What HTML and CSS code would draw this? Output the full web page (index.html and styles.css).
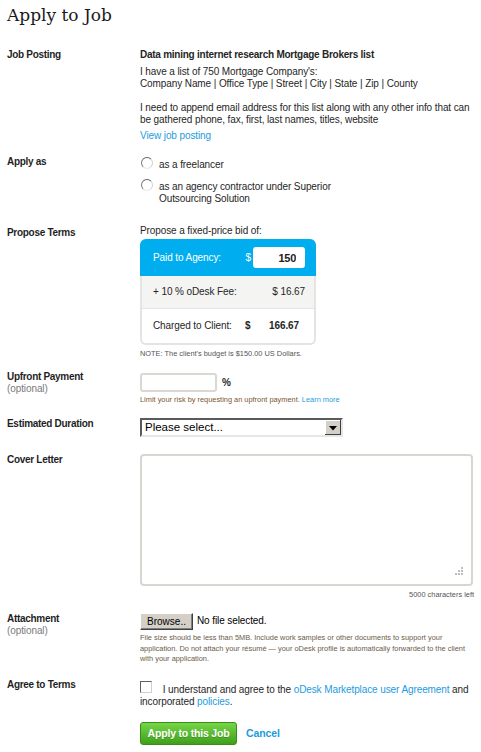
FILE: index.html
```html
<!DOCTYPE html>
<html lang="en">
<head>
    <meta charset="UTF-8">
    <title>Apply to Job</title>
    <link rel="stylesheet" href="styles.css">
</head>
<body>
    <h1>Apply to Job</h1>
    <form class="apply-form">
        <div class="field field-posting">
            <div class="field-label">Job Posting</div>
            <div class="field-body">
                <div class="job-title">Data mining internet research Mortgage Brokers list</div>
                <div class="job-desc">I have a list of 750 Mortgage Company's:<br>Company Name | Office Type | Street | City | State | Zip | County<br><br>I need to append email address for this list along with any other info that can be gathered phone, fax, first, last names, titles, website</div>
                <a class="job-link" href="#">View job posting</a>
            </div>
        </div>

        <div class="field field-apply-as">
            <div class="field-label">Apply as</div>
            <div class="field-body">
                <label class="option">
                    <input type="radio" name="apply_as" value="freelancer">
                    <span class="option-text">as a freelancer</span>
                </label>
                <label class="option">
                    <input type="radio" name="apply_as" value="agency">
                    <span class="option-text">as an agency contractor under Superior Outsourcing Solution</span>
                </label>
            </div>
        </div>

        <div class="field field-terms">
            <div class="field-label">Propose Terms</div>
            <div class="field-body">
                <div class="bid-intro">Propose a fixed-price bid of:</div>
                <div class="bid-box">
                    <div class="bid-row bid-paid">
                        <span class="bid-label">Paid to Agency:</span>
                        <span class="bid-currency">$</span>
                        <input class="bid-input" type="text" value="150">
                    </div>
                    <div class="bid-row bid-fee">
                        <span class="bid-label">+ 10 % oDesk Fee:</span>
                        <span class="bid-fee-value">$ 16.67</span>
                    </div>
                    <div class="bid-row bid-total">
                        <span class="bid-label">Charged to Client:</span>
                        <span class="bid-total-currency">$</span>
                        <span class="bid-total-value">166.67</span>
                    </div>
                </div>
                <div class="note">NOTE: The client's budget is $150.00 US Dollars.</div>
            </div>
        </div>

        <div class="field field-upfront">
            <div class="field-label">Upfront Payment<span class="optional">(optional)</span></div>
            <div class="field-body">
                <div class="upfront-input">
                    <input class="text-input percent-input" type="text">
                    <span class="percent">%</span>
                </div>
                <div class="hint hint-warm">Limit your risk by requesting an upfront payment. <a href="#">Learn more</a></div>
            </div>
        </div>

        <div class="field field-duration">
            <div class="field-label">Estimated Duration</div>
            <div class="field-body">
                <select class="duration-select">
                    <option>Please select...</option>
                    <option>Less than 1 week</option>
                    <option>1 to 4 weeks</option>
                    <option>1 to 3 months</option>
                    <option>3 to 6 months</option>
                    <option>More than 6 months</option>
                </select>
            </div>
        </div>

        <div class="field field-cover">
            <div class="field-label">Cover Letter</div>
            <div class="field-body">
                <textarea class="cover-letter"></textarea>
                <div class="note chars-left">5000 characters left</div>
            </div>
        </div>

        <div class="field field-attachment">
            <div class="field-label">Attachment<span class="optional">(optional)</span></div>
            <div class="field-body">
                <div class="file-picker">
                    <button type="button" class="browse-btn">Browse..</button>
                    <span class="file-name">No file selected.</span>
                </div>
                <div class="hint hint-file">File size should be less than 5MB. Include work samples or other documents to support your application. Do not attach your résumé — your oDesk profile is automatically forwarded to the client with your application.</div>
            </div>
        </div>

        <div class="field field-agree">
            <div class="field-label">Agree to Terms</div>
            <div class="field-body agree-text">
                <input type="checkbox" class="agree-check"> I understand and agree to the <a href="#">oDesk Marketplace user Agreement</a> and incorporated <a href="#">policies</a>.
            </div>
        </div>

        <div class="actions">
            <button type="submit" class="apply-btn">Apply to this Job</button>
            <a href="#" class="cancel-link">Cancel</a>
        </div>
    </form>
</body>
</html>
```

FILE: styles.css
```css
body {
    margin: 0;
    padding: 0 7px;
    background-color: #fff;
    color: #262626;
    font-family: "Liberation Sans", Arial, sans-serif;
    font-size: 10px;
    line-height: 12px;
    letter-spacing: -0.1px;
}
a {
    color: #1b9ce0;
    text-decoration: none;
}
h1 {
    margin: 5px 0 24px;
    font-family: "DejaVu Serif", serif;
    font-size: 17px;
    font-weight: normal;
    line-height: 20px;
    letter-spacing: 0;
    color: #1a1a1a;
}
.field {
    display: flex;
    margin-bottom: 14px;
}
.field-label {
    width: 133px;
    flex-shrink: 0;
    font-weight: bold;
    letter-spacing: -0.3px;
    color: #1f1f1f;
}
.field-body {
    flex: 1;
    min-width: 0;
}
.optional {
    display: block;
    font-weight: normal;
    letter-spacing: -0.1px;
    color: #7a7a7a;
}

/* job posting */
.job-title {
    font-weight: bold;
    letter-spacing: -0.25px;
    margin-bottom: 5px;
}
.job-link {
    display: inline-block;
    margin-top: 4px;
}

/* apply as */
.field-apply-as {
    margin-bottom: 13px;
}
.option {
    display: flex;
    align-items: flex-start;
    margin-bottom: 7px;
}
.option input {
    appearance: none;
    width: 12px;
    height: 12px;
    margin: 1px 6px 0 1px;
    border: 1px solid;
    border-color: #5f5f5f #d0d0d0 #e8e8e8 #7a7a7a;
    border-radius: 50%;
    background: #fff;
    flex-shrink: 0;
}
.option-text {
    max-width: 180px;
    padding-top: 3px;
}

/* bid box */
.field-terms {
    margin-bottom: 12px;
}
.field-terms .field-label {
    padding-top: 2px;
}
.bid-intro {
    margin-bottom: 2px;
}
.bid-box {
    width: 176px;
}
.bid-row {
    display: flex;
    align-items: center;
    box-sizing: border-box;
    padding: 0 9px 0 11px;
    border-left: 2px solid #e4e4e2;
    border-right: 2px solid #e4e4e2;
}
.bid-paid {
    height: 37px;
    background-color: #00aeef;
    color: #fff;
    border-color: #00aeef;
    border-radius: 6px 6px 0 0;
}
.bid-paid .bid-label {
    width: 93px;
}
.bid-input {
    width: 52px;
    height: 21px;
    box-sizing: border-box;
    margin-left: 2px;
    padding: 0 9px 0 0;
    border: none;
    border-radius: 3px;
    text-align: right;
    font-family: inherit;
    font-size: 11px;
    font-weight: bold;
    letter-spacing: -0.3px;
    color: #222;
}
.bid-fee {
    height: 33px;
    background-color: #f4f4f2;
    border-bottom: 1px solid #e4e4e2;
}
.bid-fee-value {
    margin-left: auto;
}
.bid-total {
    height: 36px;
    border-bottom: 2px solid #e4e4e2;
    border-radius: 0 0 6px 6px;
}
.bid-total .bid-label {
    width: 92px;
}
.bid-total-currency,
.bid-total-value {
    font-weight: bold;
}
.bid-total-currency {
    width: 24px;
}
.note {
    margin-top: 4px;
    font-size: 7.4px;
    line-height: 10px;
    letter-spacing: 0;
    color: #555;
}

/* upfront */
.field-upfront {
    margin-bottom: 12px;
}
.upfront-input {
    display: flex;
    align-items: center;
    margin-top: 2px;
}
.text-input {
    box-sizing: border-box;
    border: 2px solid #d9d9d3;
    border-radius: 3px;
    background: #fff;
}
.percent-input {
    width: 77px;
    height: 19px;
}
.percent {
    margin-left: 5px;
    font-weight: bold;
}
.hint {
    margin-top: 3px;
    font-size: 7.4px;
    line-height: 10.5px;
    letter-spacing: 0;
}
.hint-warm {
    color: #7d5530;
}

/* duration */
.field-duration {
    margin-bottom: 17px;
}
.duration-select {
    appearance: none;
    display: block;
    width: 203px;
    height: 19px;
    box-sizing: border-box;
    margin: 0;
    padding: 0 0 0 3px;
    border: 2px solid;
    border-color: #5a5a5a #e6e6e6 #e6e6e6 #5a5a5a;
    border-radius: 0;
    background: #fff url("data:image/svg+xml,%3Csvg xmlns='http://www.w3.org/2000/svg' width='16' height='15'%3E%3Crect width='16' height='15' fill='%23d4d0c8'/%3E%3Cpath d='M0 0H16M0 0V15' stroke='%23fff' stroke-width='2'/%3E%3Cpath d='M0 15H16M16 0V15' stroke='%23404040' stroke-width='2'/%3E%3Cpath d='M4 6H12L8 10.5Z' fill='%23000'/%3E%3C/svg%3E") no-repeat right 0 top 0;
    font-family: "Liberation Sans", Arial, sans-serif;
    font-size: 11.5px;
    color: #000;
}

/* cover letter */
.field-cover {
    margin-bottom: 13px;
}
.cover-letter {
    display: block;
    width: 333px;
    height: 132px;
    box-sizing: border-box;
    margin: 0;
    border: 2px solid #d7d7d1;
    border-radius: 4px;
    resize: none;
    background: #fff url("data:image/svg+xml,%3Csvg xmlns='http://www.w3.org/2000/svg' width='9' height='9' fill='%23bdbdbd'%3E%3Crect x='7' y='0' width='2' height='2'/%3E%3Crect x='4' y='3' width='2' height='2'/%3E%3Crect x='7' y='3' width='2' height='2'/%3E%3Crect x='1' y='6' width='2' height='2'/%3E%3Crect x='4' y='6' width='2' height='2'/%3E%3Crect x='7' y='6' width='2' height='2'/%3E%3C/svg%3E") no-repeat right 8px bottom 8px;
}
.chars-left {
    text-align: right;
}

/* attachment */
.field-attachment {
    margin-bottom: 14px;
}
.file-picker {
    display: flex;
    align-items: center;
}
.browse-btn {
    width: 53px;
    height: 17px;
    box-sizing: border-box;
    padding: 0;
    border: 1px solid;
    border-color: #fff #404040 #404040 #fff;
    box-shadow: inset -1px -1px 0 #808080;
    background-color: #d4d0c8;
    font-family: inherit;
    font-size: 10px;
    color: #000;
}
.file-name {
    margin-left: 4px;
    font-size: 10px;
    color: #000;
}
.hint-file {
    margin-top: 3.5px;
    color: #6b5a4a;
}

/* agree */
.agree-text {
    padding-top: 2px;
}
.agree-check {
    appearance: none;
    width: 12px;
    height: 12px;
    margin: 0 8px 0 0;
    vertical-align: 0;
    border: 1px solid;
    border-color: #5f5f5f #d0d0d0 #d0d0d0 #5f5f5f;
    background: #fff;
}

/* actions */
.actions {
    display: flex;
    align-items: center;
    margin-top: 7px;
    padding-left: 133px;
}
.apply-btn {
    width: 97px;
    height: 23px;
    padding: 0;
    border: 1px solid #3a8e18;
    border-radius: 3px;
    background: linear-gradient(#74d646, #3f9f1b);
    color: #fff;
    font-family: inherit;
    font-size: 10.5px;
    font-weight: bold;
    letter-spacing: -0.2px;
    white-space: nowrap;
    text-shadow: 0 1px 0 rgba(0, 0, 0, 0.2);
    cursor: pointer;
}
.cancel-link {
    margin-left: 9px;
    font-size: 10.5px;
    font-weight: bold;
}
```
